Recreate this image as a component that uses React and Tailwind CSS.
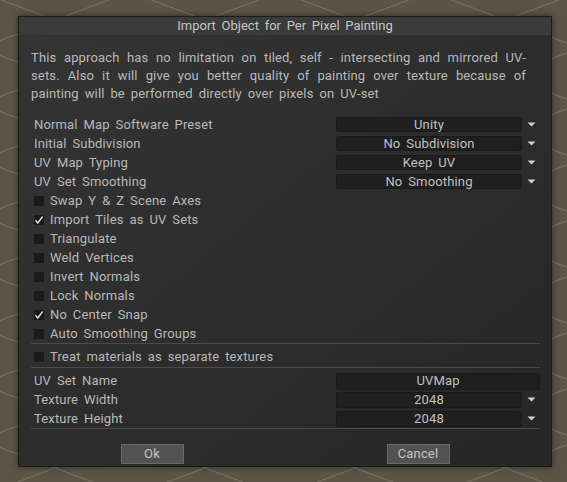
import React from 'react'

const selects = [
  ['Normal Map Software Preset', 'Unity'],
  ['Initial Subdivision', 'No Subdivision'],
  ['UV Map Typing', 'Keep UV'],
  ['UV Set Smoothing', 'No Smoothing'],
]

const checks = [
  ['Swap Y & Z Scene Axes', false],
  ['Import Tiles as UV Sets', true],
  ['Triangulate', false],
  ['Weld Vertices', false],
  ['Invert Normals', false],
  ['Lock Normals', false],
  ['No Center Snap', true],
  ['Auto Smoothing Groups', false],
]

const Arrow = () => (
  <div className="w-[18px] flex justify-center">
    <svg width="9" height="5" viewBox="0 0 9 5">
      <path d="M0.5 0.5 L8.5 0.5 L4.5 4.5 Z" fill="#d0d0d0" />
    </svg>
  </div>
)

const Dropdown = ({ value, h = 'h-[15px]' }) => (
  <div className={`w-[186px] ${h} bg-[#1f1f1f] border border-[#191919] rounded-[2px] flex items-center justify-center text-[#c0c0c0]`}>
    {value}
  </div>
)

const SelectRow = ({ label, value }) => (
  <div className="h-[19px] flex items-center pl-[3px]">
    <div className="flex-1">{label}</div>
    <Dropdown value={value} />
    <Arrow />
  </div>
)

const CheckRow = ({ label, checked }) => (
  <div className="h-[19px] flex items-center pl-[3px]">
    <div className="w-[10px] h-[10px] bg-[#1a1a1a] relative mr-[6px]">
      {checked && (
        <svg className="absolute left-0 top-0" width="10" height="10" viewBox="0 0 10 10">
          <path d="M1.5 5.2 L3.8 8 L8.6 1.5" fill="none" stroke="#dcdcdc" strokeWidth="1.4" />
        </svg>
      )}
    </div>
    <div>{label}</div>
  </div>
)

const Sep = () => <div className="h-px bg-[#4a4a4a]" />

const Background = () => (
  <svg className="absolute inset-0" width="567" height="482">
    <defs>
      <pattern id="grid" width="150" height="56" patternUnits="userSpaceOnUse" patternTransform="translate(-20 -8)">
        <path d="M0 0 L150 56 M0 56 L150 0" stroke="#8f887a" strokeWidth="1" opacity="0.6" />
      </pattern>
    </defs>
    <rect width="567" height="482" fill="#5b5447" />
    <rect width="567" height="482" fill="url(#grid)" />
  </svg>
)

export default function App() {
  return (
    <div className="w-[567px] h-[482px] relative overflow-hidden font-['Roboto',sans-serif] text-[13px] tracking-[0.15px] [word-spacing:2.5px] text-[#b8b8b8]">
      <Background />
      <div className="relative pt-[16px] pl-[18px]">
        <div className="w-[534px] h-[451px] border border-[#1b1b1b] flex flex-col shadow-[0_0_6px_rgba(0,0,0,0.5)]">
          <div className="h-[18px] bg-[#3b3b3b] text-center leading-[18px] text-[#c4c4c4] tracking-[0]">
            Import Object for Per Pixel Painting
          </div>
          <div className="flex-1 flex flex-col bg-gradient-to-br from-[#343434] to-[#262626]">
            <div className="pl-[12px] pr-[11px]">
              <div className="mt-[14px] w-[495px] leading-[18px] text-justify">
                <div className="[text-align-last:justify]">This approach has no limitation on tiled, self - intersecting and mirrored UV-</div>
                <div className="[text-align-last:justify]">sets. Also it will give you better quality of painting over texture because of</div>
                <div>painting will be performed directly over pixels on UV-set</div>
              </div>
              <div className="mt-[12px]">
                {selects.map(([l, v]) => (
                  <SelectRow key={l} label={l} value={v} />
                ))}
                {checks.map(([l, c]) => (
                  <CheckRow key={l} label={l} checked={c} />
                ))}
              </div>
              <Sep />
              <div className="h-[23px] pt-[2px] flex items-center pl-[3px]">
                <div className="w-[10px] h-[10px] bg-[#1a1a1a] mr-[6px]" />
                <div>Treat materials as separate textures</div>
              </div>
              <Sep />
              <div className="pt-[4px]">
                <div className="h-[18px] flex items-center pl-[3px]">
                  <div className="flex-1">UV Set Name</div>
                  <div className="w-[204px] h-[17px] bg-[#1f1f1f] border border-[#191919] rounded-[2px] flex items-center justify-center text-[#c0c0c0]">
                    UVMap
                  </div>
                </div>
                <div className="h-[19px] flex items-center pl-[3px]">
                  <div className="flex-1">Texture Width</div>
                  <Dropdown value="2048" h="h-[16px]" />
                  <Arrow />
                </div>
                <div className="h-[19px] flex items-center pl-[3px]">
                  <div className="flex-1">Texture Height</div>
                  <Dropdown value="2048" h="h-[16px]" />
                  <Arrow />
                </div>
              </div>
              <Sep />
            </div>
            <div className="mt-[15px] grid grid-cols-2">
              <div className="flex justify-center">
                <button className="w-[63px] h-[20px] bg-[#525252] border border-[#696969] text-[#c4c4c4] leading-[18px]">Ok</button>
              </div>
              <div className="flex justify-center">
                <button className="w-[63px] h-[20px] bg-[#525252] border border-[#696969] text-[#c4c4c4] leading-[18px]">Cancel</button>
              </div>
            </div>
          </div>
        </div>
      </div>
    </div>
  )
}
